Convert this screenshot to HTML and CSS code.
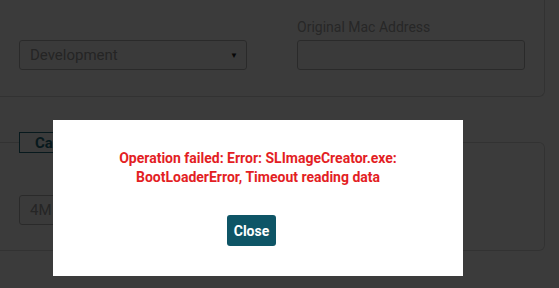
FILE: index.html
```html
<!DOCTYPE html>
<html lang="en">
<head>
    <meta charset="UTF-8">
    <meta name="viewport" content="width=device-width, initial-scale=1.0">
    <title>Device Setup</title>
    <link rel="stylesheet" href="styles.css">
</head>
<body>
    <div class="page">
        <div class="card card-top">
            <div class="form-row">
                <div class="form-group">
                    <label>&nbsp;</label>
                    <div class="select">
                        <span>Development</span>
                        <span class="caret">&#9660;</span>
                    </div>
                </div>
                <div class="form-group">
                    <label>Original Mac Address</label>
                    <input type="text">
                </div>
            </div>
        </div>

        <div class="card card-bottom">
            <button class="tab">Capture</button>
            <div class="form-row">
                <div class="form-group">
                    <div class="select">
                        <span>4M Flash</span>
                    </div>
                </div>
            </div>
        </div>
    </div>

    <div class="backdrop"></div>

    <div class="modal">
        <p class="error">Operation failed: Error: SLImageCreator.exe:<br>BootLoaderError, Timeout reading data</p>
        <div class="modal-footer">
            <button class="close" onclick="closeModal()">Close</button>
        </div>
    </div>

    <script>
        function closeModal() {
            document.querySelector('.modal').classList.add('hidden');
            document.querySelector('.backdrop').classList.add('hidden');
        }
    </script>
</body>
</html>
```

FILE: styles.css
```css
body {
    font-family: Roboto, "Liberation Sans", sans-serif;
    margin: 0;
    padding: 0;
    background-color: #ffffff;
    overflow: hidden;
}
.page {
    width: 545px;
}
.card {
    border: 1px solid #d9d9d9;
    border-left: none;
    border-radius: 0 6px 6px 0;
    background: #ffffff;
}
.card-top {
    border-top: none;
    border-radius: 0 0 6px 0;
    height: 97px;
    box-sizing: border-box;
    padding-top: 17px;
}
.card-bottom {
    margin-top: 45px;
    height: 109px;
    box-sizing: border-box;
    position: relative;
    padding-top: 52px;
}
.form-row {
    display: flex;
    gap: 50px;
    padding-left: 19px;
}
.form-group {
    width: 228px;
}
label {
    display: block;
    font-size: 14px;
    color: #a8a8a8;
    height: 23px;
    line-height: 20px;
}
.select,
input {
    box-sizing: border-box;
    width: 100%;
    height: 30px;
    border: 1px solid #b5b5b5;
    border-radius: 3px;
    background: #fafafa;
    display: flex;
    align-items: center;
    justify-content: space-between;
    padding: 0 8px 0 10px;
    font-size: 15px;
    color: #9e9e9e;
    font-family: inherit;
}
.caret {
    font-size: 8px;
    color: #222222;
}
.tab {
    position: absolute;
    left: 19px;
    top: -11px;
    height: 21px;
    padding: 0 15px;
    border: 1px solid #1f6d7e;
    background: #ffffff;
    color: #1f6d7e;
    font-family: inherit;
    font-weight: bold;
    font-size: 15px;
}
.backdrop {
    position: fixed;
    inset: 0;
    background: rgba(0, 0, 0, 0.77);
}
.modal {
    position: fixed;
    left: 53px;
    top: 120px;
    width: 410px;
    height: 156px;
    box-sizing: border-box;
    background: #ffffff;
    text-align: center;
    padding-top: 29px;
}
.error {
    margin: 0;
    color: #e31e24;
    font-weight: bold;
    font-size: 14px;
    line-height: 19px;
}
.modal-footer {
    display: flex;
    justify-content: center;
    padding-right: 13px;
    margin-top: 28px;
}
.close {
    background-color: #0e5566;
    color: #ffffff;
    border: none;
    border-radius: 3px;
    width: 49px;
    height: 31px;
    padding: 0;
    font-family: inherit;
    font-weight: bold;
    font-size: 14px;
    cursor: pointer;
}
.hidden {
    display: none;
}
```
